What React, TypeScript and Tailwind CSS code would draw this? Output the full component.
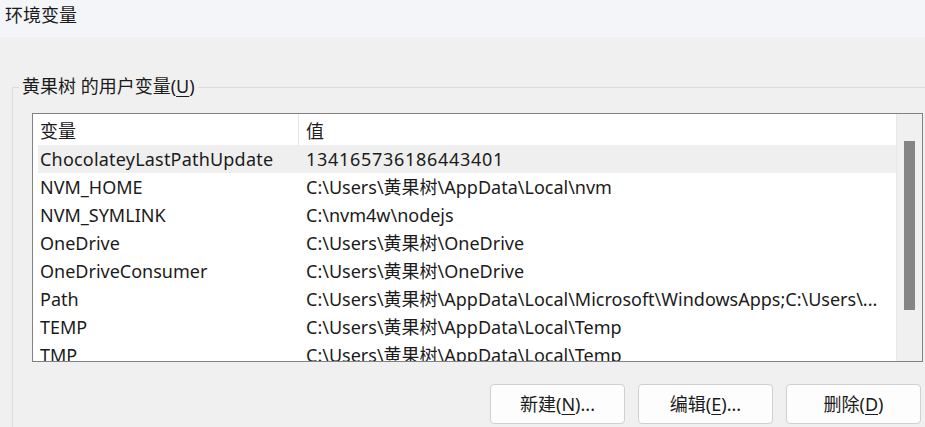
import React from "react";

const rows: [string, string][] = [
  ["ChocolateyLastPathUpdate", "134165736186443401"],
  ["NVM_HOME", "C:\\Users\\黄果树\\AppData\\Local\\nvm"],
  ["NVM_SYMLINK", "C:\\nvm4w\\nodejs"],
  ["OneDrive", "C:\\Users\\黄果树\\OneDrive"],
  ["OneDriveConsumer", "C:\\Users\\黄果树\\OneDrive"],
  ["Path", "C:\\Users\\黄果树\\AppData\\Local\\Microsoft\\WindowsApps;C:\\Users\\..."],
  ["TEMP", "C:\\Users\\黄果树\\AppData\\Local\\Temp"],
  ["TMP", "C:\\Users\\黄果树\\AppData\\Local\\Temp"],
];

function Btn({ pre, key1, post }: { pre: string; key1: string; post: string }) {
  return (
    <div className="w-[135px] h-[40px] rounded-[4px] border border-[#d0d0d0] bg-[#fdfdfd] flex items-center justify-center text-[18px] text-[#1b1b1b]">
      <span>
        {pre}(<span className="underline underline-offset-[3px]">{key1}</span>){post}
      </span>
    </div>
  );
}

export default function App() {
  return (
    <div
      className="w-[925px] h-[427px] overflow-hidden bg-[#f0f0f0] text-[#1b1b1b]"
      style={{ fontFamily: '"Noto Sans", "Noto Sans CJK SC", sans-serif' }}
    >
      <div className="h-[37px] bg-[#f3f5f9] pl-[5px] pt-[3px] text-[18px] leading-[24px]">环境变量</div>
      <div className="pl-[12px] pt-[50px]">
        <div className="relative border-l border-t border-[#dcdcdc] pt-[25px] pl-[19px] h-[360px]">
          <div className="absolute left-[6px] top-[-14px] bg-[#f0f0f0] px-[3px] text-[18px] leading-[24px]">
            黄果树 的用户变量(<span className="underline underline-offset-[3px]">U</span>)
          </div>
          <div className="w-[891px] h-[249px] border border-[#828282] bg-white flex overflow-hidden">
            <div className="flex-1 flex flex-col overflow-hidden text-[18px]">
              <div className="h-[31px] flex shrink-0">
                <div className="w-[266px] pl-[7px] border-r border-[#e5e5e5] flex items-center pt-[3px]">变量</div>
                <div className="pl-[7px] flex items-center pt-[3px]">值</div>
              </div>
              {rows.map(([k, v], i) => (
                <div
                  key={k}
                  className={
                    "ml-[5px] h-[28px] flex items-center shrink-0 " + (i === 0 ? "bg-[#efefef]" : "")
                  }
                >
                  <div className={"w-[261px] pl-[2px] whitespace-nowrap " + (i === 0 ? "tracking-[0.2px]" : "")}>{k}</div>
                  <div className={"flex-1 pl-[7px] whitespace-nowrap overflow-hidden " + (i === 0 ? "tracking-[0.7px]" : "")}>{v}</div>
                </div>
              ))}
            </div>
            <div className="w-[26px] shrink-0 bg-[#f0f0f0] border-l border-[#e8e8e8] pt-[27px] pl-[7px]">
              <div className="w-[11px] h-[169px] bg-[#858585]" />
            </div>
          </div>
          <div className="flex justify-end gap-[13px] mt-[22px] w-[889px]">
            <Btn pre="新建" key1="N" post="..." />
            <Btn pre="编辑" key1="E" post="..." />
            <Btn pre="删除" key1="D" post="" />
          </div>
        </div>
      </div>
    </div>
  );
}
